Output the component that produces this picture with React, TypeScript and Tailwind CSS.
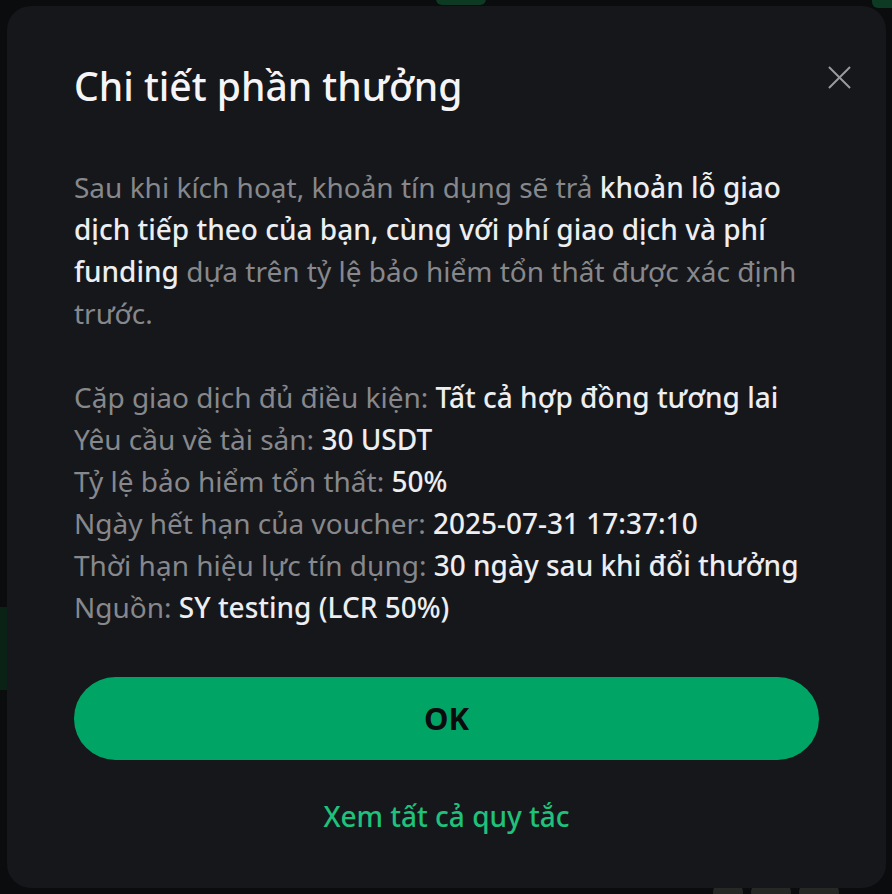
import React from 'react';

const font = { fontFamily: '"Noto Sans", "Open Sans", sans-serif' };

const details: { label: string; value: string }[] = [
  { label: 'Cặp giao dịch đủ điều kiện:', value: 'Tất cả hợp đồng tương lai' },
  { label: 'Yêu cầu về tài sản:', value: '30 USDT' },
  { label: 'Tỷ lệ bảo hiểm tổn thất:', value: '50%' },
  { label: 'Ngày hết hạn của voucher:', value: '2025-07-31 17:37:10' },
  { label: 'Thời hạn hiệu lực tín dụng:', value: '30 ngày sau khi đổi thưởng' },
  { label: 'Nguồn:', value: 'SY testing (LCR 50%)' },
];

const App: React.FC = () => {
  return (
    <div
      className="relative min-h-screen w-full overflow-hidden bg-[#0b0c0e] pt-[6px] pr-[6px] pb-[7px] pl-[7px]"
      style={font}
    >
      {/* trang phía sau modal */}
      <div className="absolute left-[436px] top-[-10px] h-[15px] w-[50px] rounded-[6px] bg-[#0c3a22]" />
      <div className="absolute right-[-8px] top-[-8px] h-[16px] w-[28px] rounded-[6px] bg-[#0c3a22]" />
      <div className="absolute left-0 top-[607px] h-[83px] w-[10px] bg-[#0a2116]" />
      <div className="absolute left-[713px] top-[884px] flex gap-[8px]">
        <div className="h-[16px] w-[30px] rounded-full bg-[#262826]" />
        <div className="h-[16px] w-[40px] rounded-full bg-[#262826]" />
        <div className="h-[16px] w-[40px] rounded-full bg-[#262826]" />
      </div>

      <div className="relative flex flex-col rounded-[24px] bg-[#16171b] px-[67px] pt-[56px] pb-[51px]">
        <div className="flex items-start justify-between">
          <h1 className="text-[39px] font-medium leading-[48px] text-[#f5f5f7]">Chi tiết phần thưởng</h1>
          <button className="mt-[4px] -mr-[32px] h-[23px] w-[23px] text-[#9a9b9f]">
            <svg viewBox="0 0 24 24" className="h-full w-full" fill="none" stroke="currentColor" strokeWidth="2">
              <path d="M1 1L23 23M23 1L1 23" />
            </svg>
          </button>
        </div>

        <p className="mt-[56px] text-[28px] leading-[42px] text-[#87888c]">
          Sau khi kích hoạt, khoản tín dụng sẽ trả{' '}
          <span className="font-medium text-[#eceef1]">
            khoản lỗ giao dịch tiếp theo của bạn, cùng với phí giao dịch và phí funding
          </span>{' '}
          dựa trên tỷ lệ bảo hiểm tổn thất được xác định trước.
        </p>

        <div className="mt-[42px] flex flex-col text-[28px] leading-[42px]">
          {details.map(d => (
            <div key={d.label} className="text-[#87888c]">
              {d.label} <span className="font-medium text-[#eceef1]">{d.value}</span>
            </div>
          ))}
        </div>

        <button className="mt-[49px] flex h-[83px] w-full items-center justify-center rounded-full bg-[#00a566] text-[31px] font-bold text-[#0b0c0e]">
          OK
        </button>

        <div className="mt-[35px] text-center text-[28px] font-medium leading-[42px] text-[#1ec27b]">
          Xem tất cả quy tắc
        </div>
      </div>
    </div>
  );
};

export default App;
